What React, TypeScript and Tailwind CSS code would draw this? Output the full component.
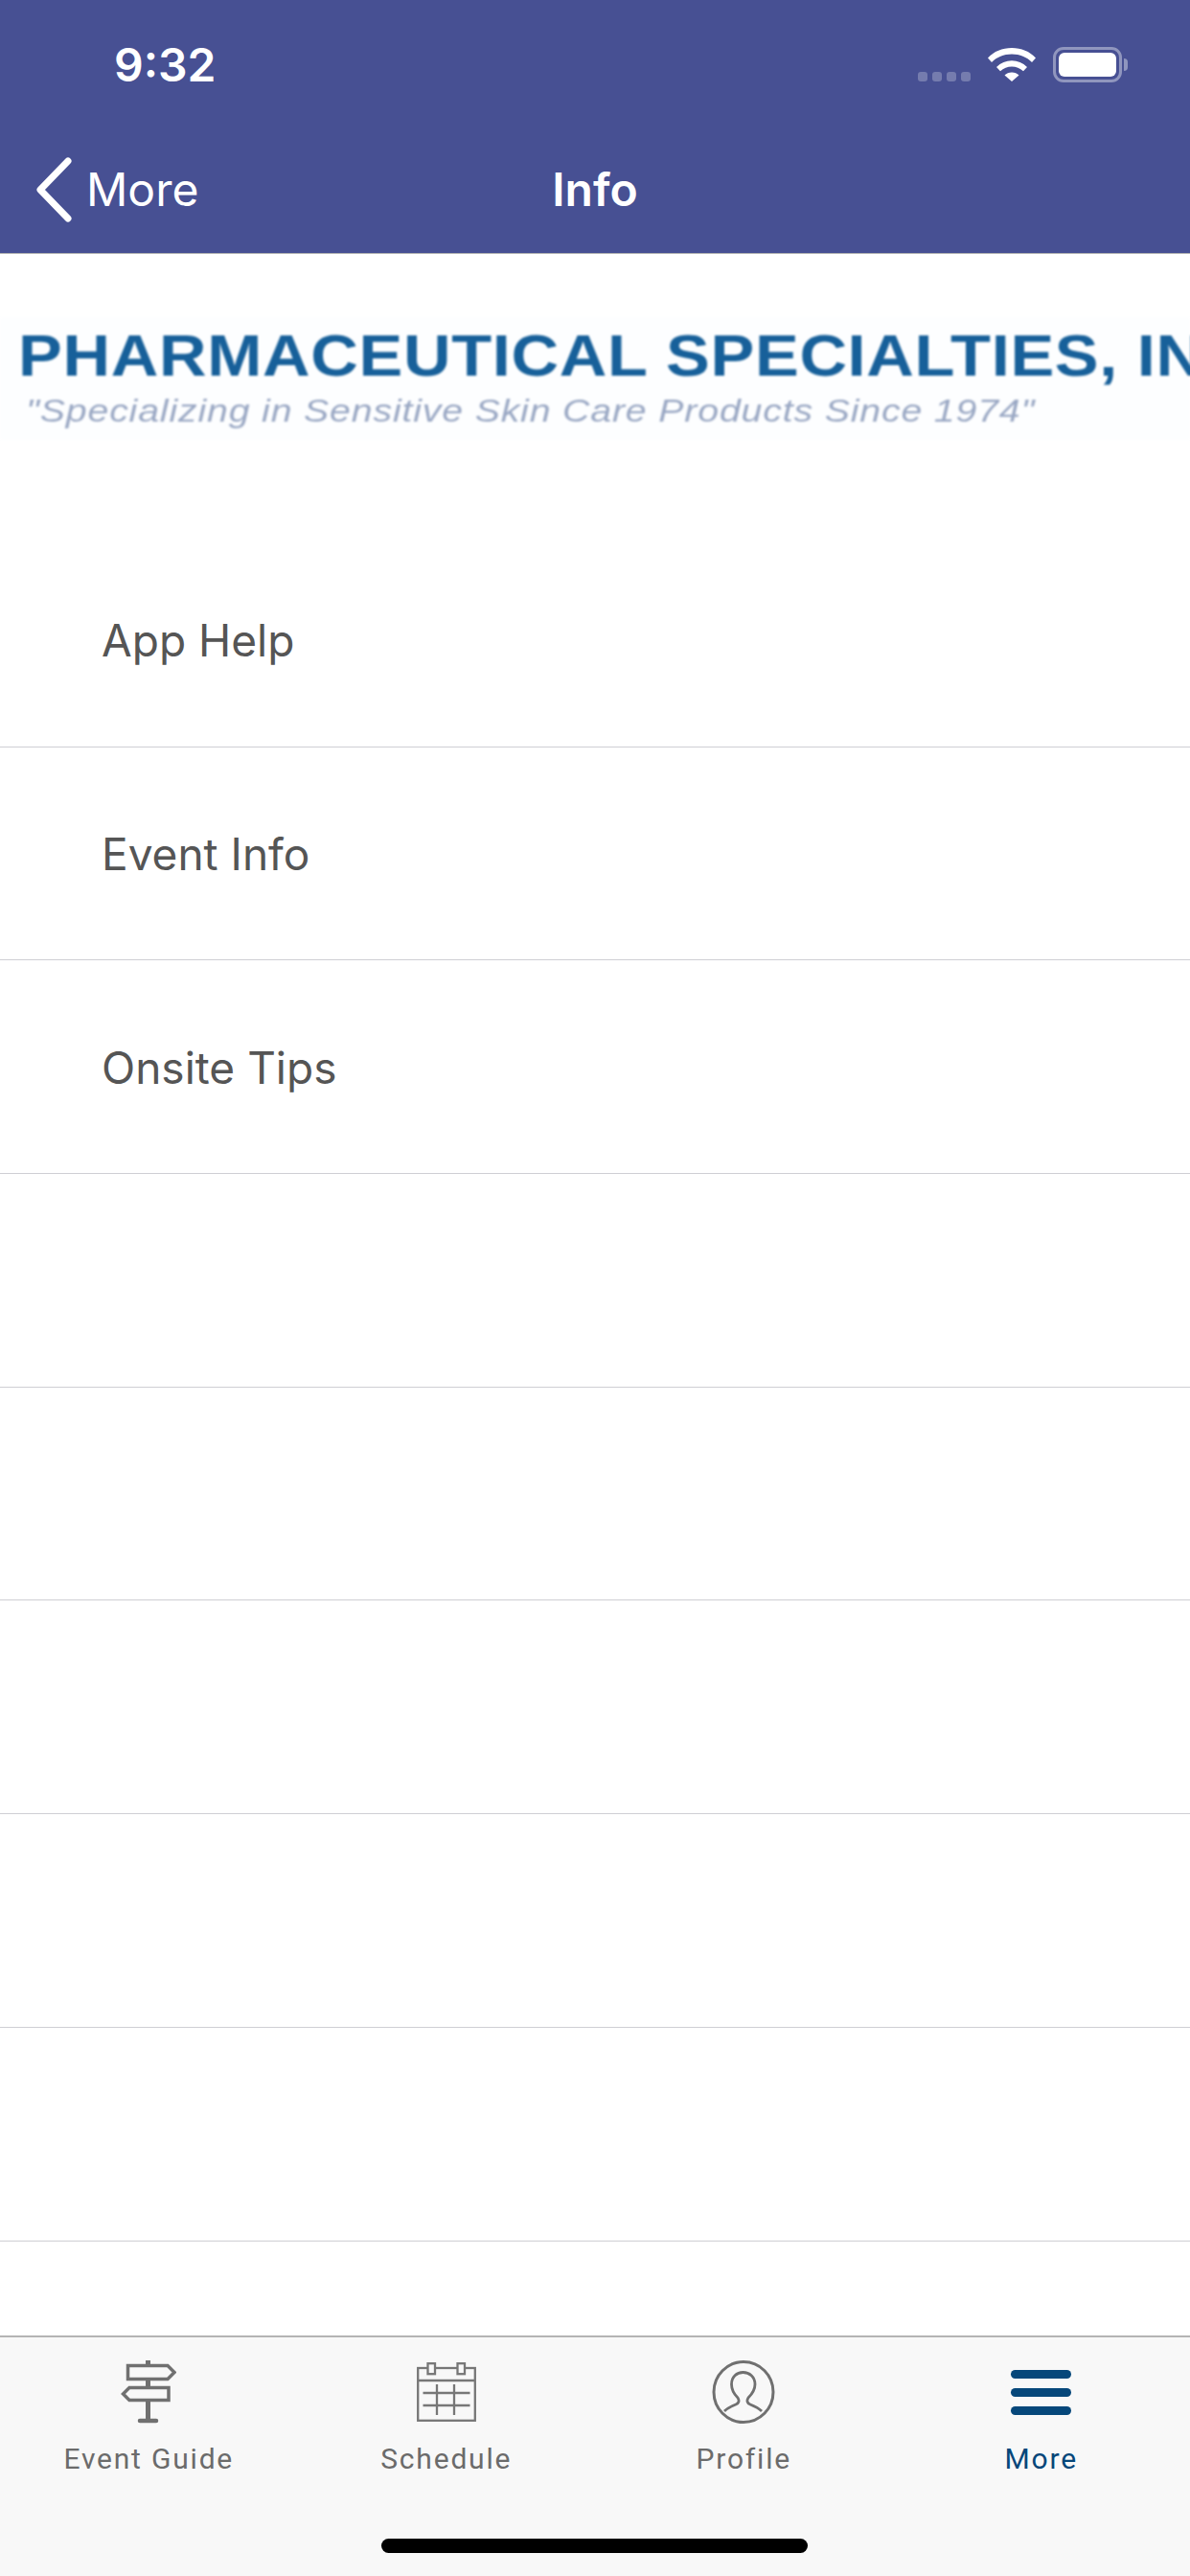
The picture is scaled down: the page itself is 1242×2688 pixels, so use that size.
import React from 'react';

const ROWS = ['App Help', 'Event Info', 'Onsite Tips', '', '', '', '', ''];

function Wifi() {
  return (
    <svg width="50" height="36" viewBox="0 0 50 36" fill="white">
      <path d="M0 11.500C6.500 4.500 15 1 25 1s18.500 3.500 25 10.500l-4 4.500C40.500 10.500 33.500 7.500 25 7.500S9.500 10.500 4 16z" />
      <path d="M9 21c4.500-4.500 10-6.800 16-6.800S36.500 16.500 41 21l-4 4.300c-3.400-3.200-7.500-4.800-12-4.800s-8.600 1.600-12 4.800z" />
      <path d="M17.500 29.500c2-2 4.500-3 7.500-3s5.500 1 7.500 3L25 36z" />
    </svg>
  );
}

function BackChevron() {
  return (
    <svg width="40" height="68" viewBox="0 0 40 68" fill="none" stroke="white" strokeWidth="7" strokeLinecap="round" strokeLinejoin="round">
      <path d="M34 4L5 34l29 30" />
    </svg>
  );
}

function SignPost() {
  return (
    <svg width="58" height="66" viewBox="0 0 58 66" fill="none" stroke="#707070" strokeWidth="3.500">
      <path d="M7.500 5.500H49l7 7-7 7H7.500z" />
      <path d="M50 28.500H9L2.500 35 9 41.500h41z" />
      <path d="M28.500 0v5M28.500 20v8M28.500 42v20" strokeWidth="5" />
      <path d="M20 63h17" strokeWidth="4.500" strokeLinecap="round" />
    </svg>
  );
}

function CalendarIcon() {
  return (
    <svg width="62" height="62" viewBox="0 0 62 62" fill="none" stroke="#777777" strokeWidth="2.300">
      <rect x="1.200" y="6" width="59.600" height="54.800" />
      <path d="M1 19h60" />
      <rect x="11.500" y="1.200" width="7.500" height="11" fill="#f8f8f8" />
      <rect x="42.500" y="1.200" width="7.500" height="11" fill="#f8f8f8" />
      <path d="M6.500 32h49M6.500 45h49M21 23v32M39 23v32" />
    </svg>
  );
}

function ProfileIcon() {
  return (
    <svg width="66" height="66" viewBox="0 0 66 66" fill="none" stroke="#707070">
      <ellipse cx="33" cy="33" rx="31" ry="31.500" strokeWidth="3" />
      <path
        d="M13 53c3-3 7-5 12-7 3-1 4-4 2-7-4-4-6.500-8-6.500-14C20.500 17 26 12.500 32.500 12.500S45 17 45 25c0 6-3 10-7 14-2 3-1 6 2 7 5 2 9 4 12 7"
        strokeWidth="2.800"
      />
    </svg>
  );
}

function MenuIcon() {
  return (
    <div className="flex flex-col gap-[10px] w-[63px]">
      <div className="h-[9px] rounded-full bg-[#06477a]" />
      <div className="h-[9px] rounded-full bg-[#06477a]" />
      <div className="h-[9px] rounded-full bg-[#06477a]" />
    </div>
  );
}

function TabItem({ label, active, children }: { label: string; active?: boolean; children: React.ReactNode }) {
  return (
    <div className="flex-1 flex flex-col items-center">
      <div className="h-[68px] flex items-center justify-center">{children}</div>
      <div
        className={`mt-[18px] text-[30px] leading-[36px] tracking-[1.8px] font-['Roboto',sans-serif] ${
          active ? 'text-[#06477a]' : 'text-[#6b6b6b]'
        }`}
      >
        {label}
      </div>
    </div>
  );
}

export default function App() {
  return (
    <div className="w-[1242px] h-[2688px] bg-white flex flex-col overflow-hidden font-['Inter',sans-serif]">
      {/* status + nav */}
      <div className="bg-[#475093] text-white h-[265px] border-b border-[#b4b4b4] shrink-0">
        <div className="h-[148px] flex items-start pt-[43px] pl-[119px] pr-[65px]">
          <div className="text-[48px] leading-[50px] font-semibold">9:32</div>
          <div className="ml-auto flex items-start pt-[6px]">
            <div className="flex gap-[5px] mt-[26px] mr-[18px]">
              <div className="w-[10px] h-[10px] rounded-[3px] bg-white/25" />
              <div className="w-[10px] h-[10px] rounded-[3px] bg-white/25" />
              <div className="w-[10px] h-[10px] rounded-[3px] bg-white/25" />
              <div className="w-[10px] h-[10px] rounded-[3px] bg-white/25" />
            </div>
            <Wifi />
            <div className="ml-[18px] w-[72px] h-[37px] rounded-[11px] border-[3px] border-white/40 p-[3px]">
              <div className="w-full h-full rounded-[6px] bg-white" />
            </div>
            <div className="ml-[2px] mt-[12px] w-[4px] h-[13px] rounded-r-full bg-white/40" />
          </div>
        </div>
        <div className="relative h-[100px] flex items-center justify-center">
          <div className="absolute left-[37px] top-0 h-full flex items-center gap-[13px]">
            <BackChevron />
            <span className="text-[48px] font-normal">More</span>
          </div>
          <div className="text-[48px] font-semibold">Info</div>
        </div>
      </div>

      {/* logo banner */}
      <div className="h-[292px] pt-[66px] shrink-0 overflow-hidden">
        <div className="h-[128px] pl-[19px] bg-[#fdfeff] blur-[1px] whitespace-nowrap font-['Liberation_Sans',sans-serif]">
          <div className="pt-[5px] text-[61px] leading-[70px] font-bold tracking-[0.6px] text-[#17609a] origin-left scale-x-[1.125]">
            PHARMACEUTICAL SPECIALTIES, IN
          </div>
          <div className="mt-[5px] ml-[8px] text-[33px] leading-[36px] italic tracking-[0.7px] text-[#9aa8c4] origin-left scale-x-[1.19]">
            "Specializing in Sensitive Skin Care Products Since 1974"
          </div>
        </div>
      </div>

      {/* list */}
      <div className="flex-1 overflow-hidden">
        {ROWS.map((label, i) => (
          <div key={i} className="h-[222.700px] border-b border-[#cfcfd4] flex items-center pl-[106px] pt-[2px] text-[46px] text-[#555555]">
            {label}
          </div>
        ))}
      </div>

      {/* tab bar */}
      <div className="relative h-[251px] shrink-0 bg-[#f8f8f8] border-t-2 border-[#b4b4b4] pt-[23px] flex">
        <TabItem label="Event Guide"><SignPost /></TabItem>
        <TabItem label="Schedule"><CalendarIcon /></TabItem>
        <TabItem label="Profile"><ProfileIcon /></TabItem>
        <TabItem label="More" active><MenuIcon /></TabItem>
        <div className="absolute left-[398px] bottom-[24px] w-[445px] h-[15px] rounded-full bg-black" />
      </div>
    </div>
  );
}
